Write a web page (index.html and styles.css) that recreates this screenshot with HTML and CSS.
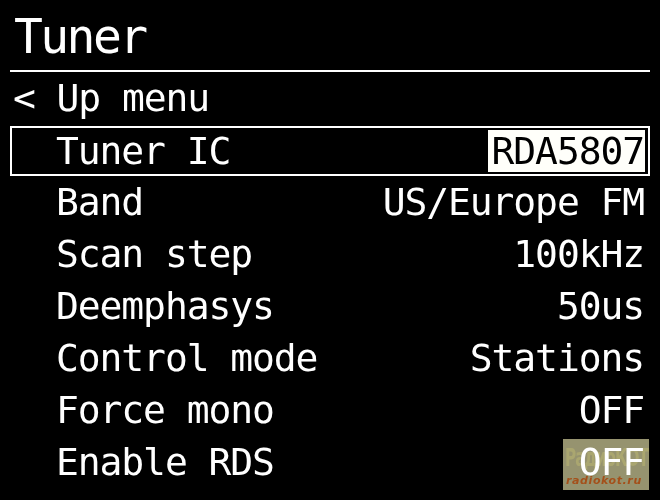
FILE: index.html
```html
<!DOCTYPE html>
<html lang="en">
<head>
  <meta charset="UTF-8">
  <title>Tuner</title>
  <link rel="stylesheet" href="styles.css">
</head>
<body>
  <div class="screen">
    <div class="title">Tuner</div>
    <div class="menu">
      <div class="row back">&lt; Up menu</div>
      <div class="row selected">
        <span class="name">Tuner IC</span>
        <span class="value edit">RDA5807</span>
      </div>
      <div class="row"><span class="name">Band</span><span class="value">US/Europe FM</span></div>
      <div class="row"><span class="name">Scan step</span><span class="value">100kHz</span></div>
      <div class="row"><span class="name">Deemphasys</span><span class="value">50us</span></div>
      <div class="row"><span class="name">Control mode</span><span class="value">Stations</span></div>
      <div class="row"><span class="name">Force mono</span><span class="value">OFF</span></div>
      <div class="row"><span class="name">Enable RDS</span><span class="value">OFF</span></div>
    </div>
    <div class="stamp">
      <span class="stamp-big">РадиоКОТ</span>
      <span class="stamp-url">radiokot.ru</span>
    </div>
  </div>
</body>
</html>
```

FILE: styles.css
```css
body {
  margin: 0;
  background: #000;
}
.screen {
  position: relative;
  width: 660px;
  height: 500px;
  overflow: hidden;
  background: #000;
  color: #fff;
  font-family: "DejaVu Sans Mono", "Liberation Mono", monospace;
}
.title {
  margin: 0 10px;
  padding: 2px 0 0 4px;
  height: 68px;
  line-height: 68px;
  font-size: 48px;
  letter-spacing: -2.6px;
  border-bottom: 2px solid #fff;
}
.row {
  display: flex;
  justify-content: space-between;
  height: 52px;
  line-height: 52px;
  font-size: 38px;
  letter-spacing: -1.1px;
  padding: 0 16px 0 56px;
  white-space: pre;
}
.row.back {
  padding-left: 13px;
}
.row.selected {
  height: 46px;
  line-height: 46px;
  margin: 2px 10px 0 10px;
  border: 2px solid #fff;
  padding: 0 3px 0 44px;
  align-items: stretch;
}
.value.edit {
  margin: 2px 0;
  line-height: 42px;
  padding: 0 1px 0 4px;
  background: #fffffa;
  color: #000;
}
/* site watermark over the screenshot */
.stamp {
  position: absolute;
  left: 563px;
  top: 439px;
  width: 86px;
  height: 51px;
  background: #96936f;
  mix-blend-mode: screen;
  overflow: hidden;
}
.stamp-big {
  position: absolute;
  left: 2px;
  top: 3px;
  font-family: "DejaVu Sans Condensed", "DejaVu Sans", sans-serif;
  font-size: 17px;
  line-height: 20px;
  font-weight: bold;
  letter-spacing: -1px;
  color: #aaa670;
  white-space: nowrap;
  transform: scaleY(1.5);
  transform-origin: top left;
}
.stamp-url {
  position: absolute;
  left: 3px;
  bottom: 3px;
  font-family: "DejaVu Sans", sans-serif;
  font-size: 11px;
  line-height: 12px;
  font-weight: bold;
  font-style: italic;
  letter-spacing: 0.6px;
  color: #a4501a;
}
```
